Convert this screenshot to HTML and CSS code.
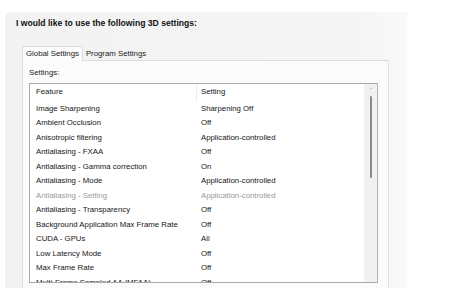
FILE: index.html
```html
<!DOCTYPE html>
<html lang="en">
<head>
  <meta charset="UTF-8">
  <meta name="viewport" content="width=device-width, initial-scale=1.0">
  <title>3D Settings</title>
  <link rel="stylesheet" href="styles.css">
</head>
<body>
  <div class="page">
    <h1 class="title">I would like to use the following 3D settings:</h1>

    <div class="tabs">
      <div class="tab active">Global Settings</div>
      <div class="tab">Program Settings</div>
    </div>

    <div class="tab_panel">
      <div class="caption">Settings:</div>

      <div class="listbox">
        <div class="list">
          <div class="row head">
            <span class="feature">Feature</span>
            <span class="setting">Setting</span>
          </div>
          <div class="row"><span class="feature">Image Sharpening</span><span class="setting">Sharpening Off</span></div>
          <div class="row"><span class="feature">Ambient Occlusion</span><span class="setting">Off</span></div>
          <div class="row"><span class="feature">Anisotropic filtering</span><span class="setting">Application-controlled</span></div>
          <div class="row"><span class="feature">Antialiasing - FXAA</span><span class="setting">Off</span></div>
          <div class="row"><span class="feature">Antialiasing - Gamma correction</span><span class="setting">On</span></div>
          <div class="row"><span class="feature">Antialiasing - Mode</span><span class="setting">Application-controlled</span></div>
          <div class="row disabled"><span class="feature">Antialiasing - Setting</span><span class="setting">Application-controlled</span></div>
          <div class="row"><span class="feature">Antialiasing - Transparency</span><span class="setting">Off</span></div>
          <div class="row"><span class="feature">Background Application Max Frame Rate</span><span class="setting">Off</span></div>
          <div class="row"><span class="feature">CUDA - GPUs</span><span class="setting">All</span></div>
          <div class="row"><span class="feature">Low Latency Mode</span><span class="setting">Off</span></div>
          <div class="row"><span class="feature">Max Frame Rate</span><span class="setting">Off</span></div>
          <div class="row"><span class="feature">Multi-Frame Sampled AA (MFAA)</span><span class="setting">Off</span></div>
        </div>

        <div class="scrollbar">
          <span class="arrow"></span>
          <span class="thumb"></span>
        </div>
      </div>
    </div>
  </div>
</body>
</html>
```

FILE: styles.css
```css
*{
  box-sizing: border-box;
  font-family: "Liberation Sans", Arial, sans-serif;
}

body{
  margin: 0;
  background: #ffffff;
  height: 288px;
  overflow: hidden;
}

.page{
  margin: 12px 0 0 5px;
  width: 402px;
  height: 276px;
  background: linear-gradient(to right, #f3f3f3 0%, #f4f4f4 85%, #f9f9f9 100%);
  border-radius: 5px 0 0 0;
  padding: 6px 0 0 11px;
}

.title{
  margin: 0;
  font-size: 8.6px;
  font-weight: bold;
  line-height: 11px;
  color: #111;
}

.tabs{
  display: flex;
  margin: 16px 0 0 6px;
  height: 15px;
  align-items: flex-end;
}

.tab{
  font-size: 7.8px;
  color: #1a1a1a;
  padding: 0 3px;
  line-height: 13px;
}

.tab.active{
  background: #fbfbfb;
  border: 1px solid #dcdcdc;
  border-bottom: none;
  line-height: 14px;
  margin-bottom: -1px;
  position: relative;
}

.tab_panel{
  margin-left: 6px;
  width: 367px;
  height: 229px;
  background: #fbfbfb;
  border: 1px solid #dcdcdc;
  border-right-color: #e4e4e4;
  border-bottom: none;
  padding: 6px 0 0 6px;
}

.caption{
  font-size: 7.8px;
  color: #1a1a1a;
  line-height: 12px;
}

.listbox{
  display: flex;
  margin-top: 4px;
  width: 349px;
  height: 200px;
  background: #ffffff;
  border: 1px solid #a9a9a9;
  border-right-color: #b4b4b4;
}

.list{
  flex: 1;
  overflow: hidden;
}

.row{
  display: grid;
  grid-template-columns: 166px 1fr;
  height: 14.5px;
  line-height: 14.5px;
  font-size: 7.8px;
  color: #161616;
  white-space: nowrap;
}

.row.head{
  height: 17.5px;
  line-height: 16px;
}

.row.head .setting{
  border-left: 1px solid #ececec;
  padding-left: 4px;
}

.row.disabled{
  color: #9a9a9a;
}

.feature{
  padding-left: 6px;
}

.setting{
  padding-left: 5px;
}

.scrollbar{
  display: flex;
  flex-direction: column;
  align-items: center;
  width: 13px;
  background: #f1f1f1;
}

.arrow{
  margin-top: 3px;
  width: 0;
  height: 0;
  border-left: 2px solid transparent;
  border-right: 2px solid transparent;
  border-bottom: 2px solid #d0d0d0;
}

.thumb{
  margin-top: 7px;
  width: 2px;
  height: 82px;
  background: #8a8a8a;
  border-radius: 1px;
}
```
